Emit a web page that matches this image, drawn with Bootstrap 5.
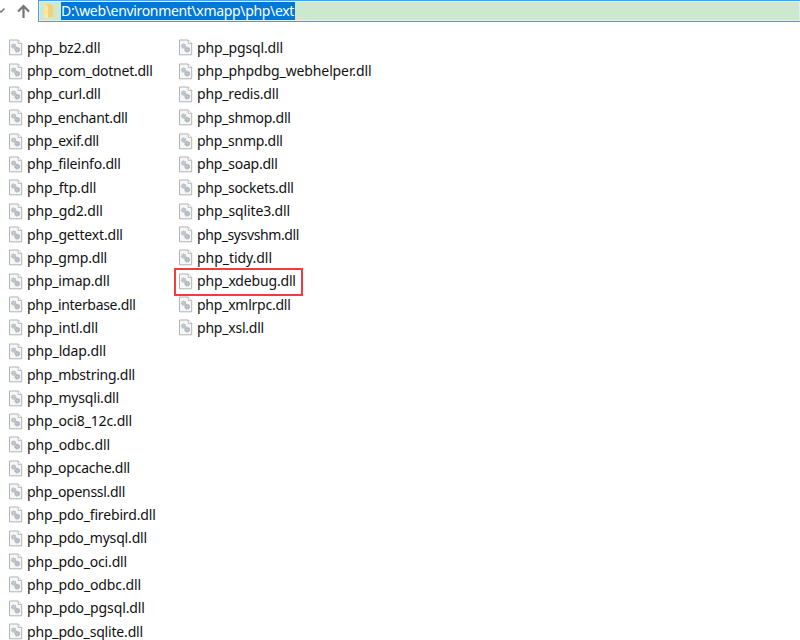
<!DOCTYPE html>
<html lang="en">
<head>
<meta charset="utf-8">
<meta name="viewport" content="width=device-width, initial-scale=1">
<title>ext</title>
<link href="https://cdn.jsdelivr.net/npm/bootstrap@5.3.0/dist/css/bootstrap.min.css" rel="stylesheet">
<style>
body{font-family:"Noto Sans","Open Sans",sans-serif;font-size:14px;color:#111;height:640px;background:#fff}
.topbar{height:22px}
.nav-icons{width:38px;flex:none}
.address{height:22px;background:#cce8cf;border:1px solid #4ba0e4;border-right:0;box-shadow:inset 0 0 0 1px #dfeef0}
.folder{margin-left:3px;width:12px}
.path{background:#0078d7;color:#fff;height:18px;line-height:18px;margin-left:7px;width:234px;white-space:nowrap}
.files{padding:14px 0 0 8px}
.file-col{width:170px}
.entry{height:23.36px;white-space:nowrap;line-height:20px}
.entry svg{flex:none;margin-right:4px}
.chosen{position:relative}
.chosen::after{content:"";position:absolute;left:-4px;top:-2px;width:129px;height:28px;border:2px solid #f23b3f}
</style>
</head>
<body class="overflow-hidden">
<svg width="0" height="0" class="position-absolute">
<symbol id="dll" viewBox="0 0 15 17">
<path d="M1.5 1h8.8l3.4 3.4v11.4H1.5z" fill="#f6f7f7" stroke="#b3b3b3"/>
<path d="M10.2 1v3.4h3.4" fill="#fff" stroke="#b3b3b3" stroke-width=".9"/>
<circle cx="5.6" cy="7.1" r="2.1" fill="#bcc4ca" stroke="#b4bdc4" stroke-width="1.2" stroke-dasharray="1.1 .55"/>
<circle cx="9.2" cy="10.7" r="2.3" fill="#b3bcc3" stroke="#a8b2ba" stroke-width="1.2" stroke-dasharray="1.1 .55"/>
<circle cx="5.6" cy="7.1" r=".5" fill="#d4dade"/><circle cx="9.2" cy="10.7" r=".6" fill="#d4dade"/>
</symbol>
</svg>
<header class="topbar d-flex">
<div class="nav-icons">
<svg width="37" height="22" class="d-block" fill="none" stroke="#777"><path d="M-3 9l4 3 3.5-3.5" stroke-width="1.5"/><path d="M23.5 18V6.5M18 11.5l5.5-5.5 5.5 5.5" stroke-width="2.2"/></svg>
</div>
<div class="address d-flex align-items-center flex-grow-1">
<svg class="folder" height="18" viewBox="0 0 12 18"><path d="M2 2h7l2 2v11H2z" fill="#f3d27a"/><path d="M2 2l4 2v13l-4-2z" fill="#ffe69b"/></svg>
<div class="path"><span data-w="233">D:\web\environment\xmapp\php\ext</span></div>
</div>
</header>
<main class="files d-flex"></main>
<script src="https://cdn.jsdelivr.net/npm/bootstrap@5.3.0/dist/js/bootstrap.bundle.min.js"></script>
<script>
// Each entry: name after "php_" and its text width
const columns=[
[["bz2",73.6],["com_dotnet",125.6],["curl",73.6],["enchant",100.6],["exif",72],["fileinfo",93.6],["ftp",69.3],["gd2",75.8],["gettext",95.8],["gmp",80],["imap",82.6],["interbase",108.6],["intl",71],["ldap",79],["mbstring",108],["mysqli",92],["oci8_12c",105],["odbc",83],["opcache",103],["openssl",98],["pdo_firebird",128.6],["pdo_mysql",120],["pdo_oci",100],["pdo_odbc",114],["pdo_pgsql",117.8],["pdo_sqlite",116]],
[["pgsql",86],["phpdbg_webhelper",174.4],["redis",81.6],["shmop",93.6],["snmp",85.6],["soap",80.6],["sockets",96.6],["sqlite3",93],["sysvshm",102],["tidy",75],["xdebug",98.8],["xmlrpc",93.6],["xsl",67]]];
document.querySelector('.files').innerHTML=columns.map(c=>'<div class="file-col">'+c.map(([n,w])=>
`<div class="entry d-flex align-items-center${n==='xdebug'?' chosen':''}"><svg width="15" height="17"><use href="#dll"/></svg><span data-w="${w}">php_${n}.dll</span></div>`).join('')+'</div>').join('');
document.querySelectorAll('[data-w]').forEach(e=>{
const w=e.getBoundingClientRect().width;
e.style.letterSpacing=((+e.dataset.w-w)/e.textContent.length).toFixed(3)+'px';
});
</script>
</body>
</html>
